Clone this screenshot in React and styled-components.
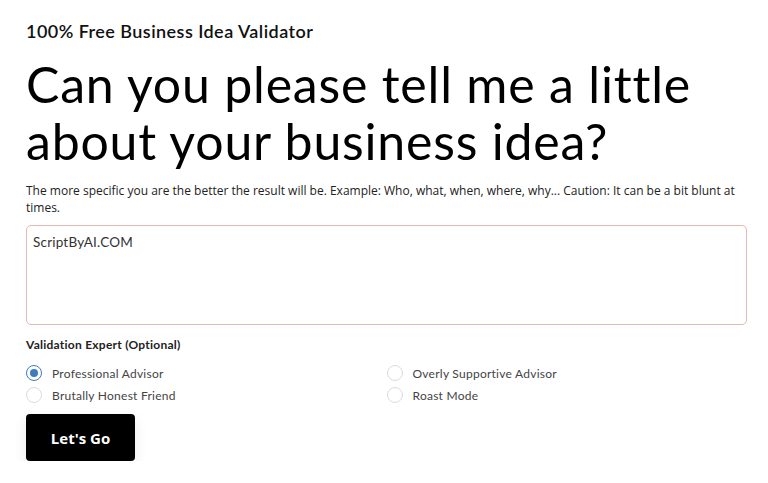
import React, { useState } from 'react';
import styled, { createGlobalStyle } from 'styled-components';

const GlobalStyle = createGlobalStyle`
  body {
    margin: 0;
    background: #fff;
    font-family: "Open Sans", "Liberation Sans", sans-serif;
    color: #111;
  }
`;

const Page = styled.main`
  width: 721px;
  margin-left: 26px;
  padding-top: 20px;
`;

const Kicker = styled.h3`
  margin: 0;
  font-family: "Lato", sans-serif;
  font-size: 18px;
  font-weight: 600;
  letter-spacing: 0.45px;
  line-height: 22px;
  color: #111;
`;

const Title = styled.h1`
  margin: 14px 0 0;
  font-family: "Lato", sans-serif;
  font-size: 50px;
  font-weight: 400;
  letter-spacing: 0.8px;
  line-height: 57px;
  color: #000;
`;

const Hint = styled.p`
  margin: 12px 0 0;
  font-size: 12px;
  line-height: 17px;
  color: #222;
`;

const IdeaBox = styled.textarea`
  display: block;
  box-sizing: border-box;
  width: 100%;
  height: 100px;
  margin-top: 9px;
  padding: 8px 6px;
  border: 1px solid #e3b9b1;
  border-radius: 5px;
  resize: none;
  font-family: "Lato", sans-serif;
  font-size: 13.5px;
  letter-spacing: 0.2px;
  color: #333;
  outline: none;
`;

const GroupLabel = styled.div`
  margin-top: 12px;
  font-family: "Lato", sans-serif;
  font-size: 12px;
  font-weight: 700;
  letter-spacing: 0.25px;
  color: #222;
`;

const Options = styled.div`
  display: grid;
  grid-template-columns: 1fr 1fr;
  row-gap: 6px;
  margin-top: 13px;
`;

const Option = styled.label`
  display: flex;
  align-items: center;
  gap: 10px;
  font-family: "Lato", sans-serif;
  font-size: 12px;
  letter-spacing: 0.25px;
  color: #444;
  cursor: pointer;
`;

const Dot = styled.span`
  box-sizing: border-box;
  width: 16px;
  height: 16px;
  border-radius: 50%;
  border: 1px solid ${p => (p.$on ? '#3d7cc0' : '#dcdcdc')};
  display: flex;
  align-items: center;
  justify-content: center;
  &::after {
    content: '';
    width: 8px;
    height: 8px;
    border-radius: 50%;
    background: ${p => (p.$on ? '#3d7cc0' : 'transparent')};
  }
`;

const GoButton = styled.button`
  margin-top: 11px;
  width: 109px;
  height: 47px;
  border: none;
  border-radius: 4px;
  background: #000;
  color: #fff;
  font-family: "Open Sans", sans-serif;
  font-size: 15px;
  font-weight: 700;
  box-shadow: 0 6px 14px rgba(0, 0, 0, 0.08);
  cursor: pointer;
`;

const experts = [
  'Professional Advisor',
  'Overly Supportive Advisor',
  'Brutally Honest Friend',
  'Roast Mode',
];

export default function App() {
  const [expert, setExpert] = useState('Professional Advisor');
  return (
    <Page>
      <GlobalStyle />
      <Kicker>100% Free Business Idea Validator</Kicker>
      <Title>Can you please tell me a little about your business idea?</Title>
      <Hint>
        The more specific you are the better the result will be. Example: Who, what, when, where, why... Caution: It can be a bit blunt at times.
      </Hint>
      <IdeaBox defaultValue="ScriptByAI.COM" />
      <GroupLabel>Validation Expert (Optional)</GroupLabel>
      <Options>
        {experts.map(name => (
          <Option key={name} onClick={() => setExpert(name)}>
            <Dot $on={expert === name} />
            {name}
          </Option>
        ))}
      </Options>
      <GoButton>Let's Go</GoButton>
    </Page>
  );
}
